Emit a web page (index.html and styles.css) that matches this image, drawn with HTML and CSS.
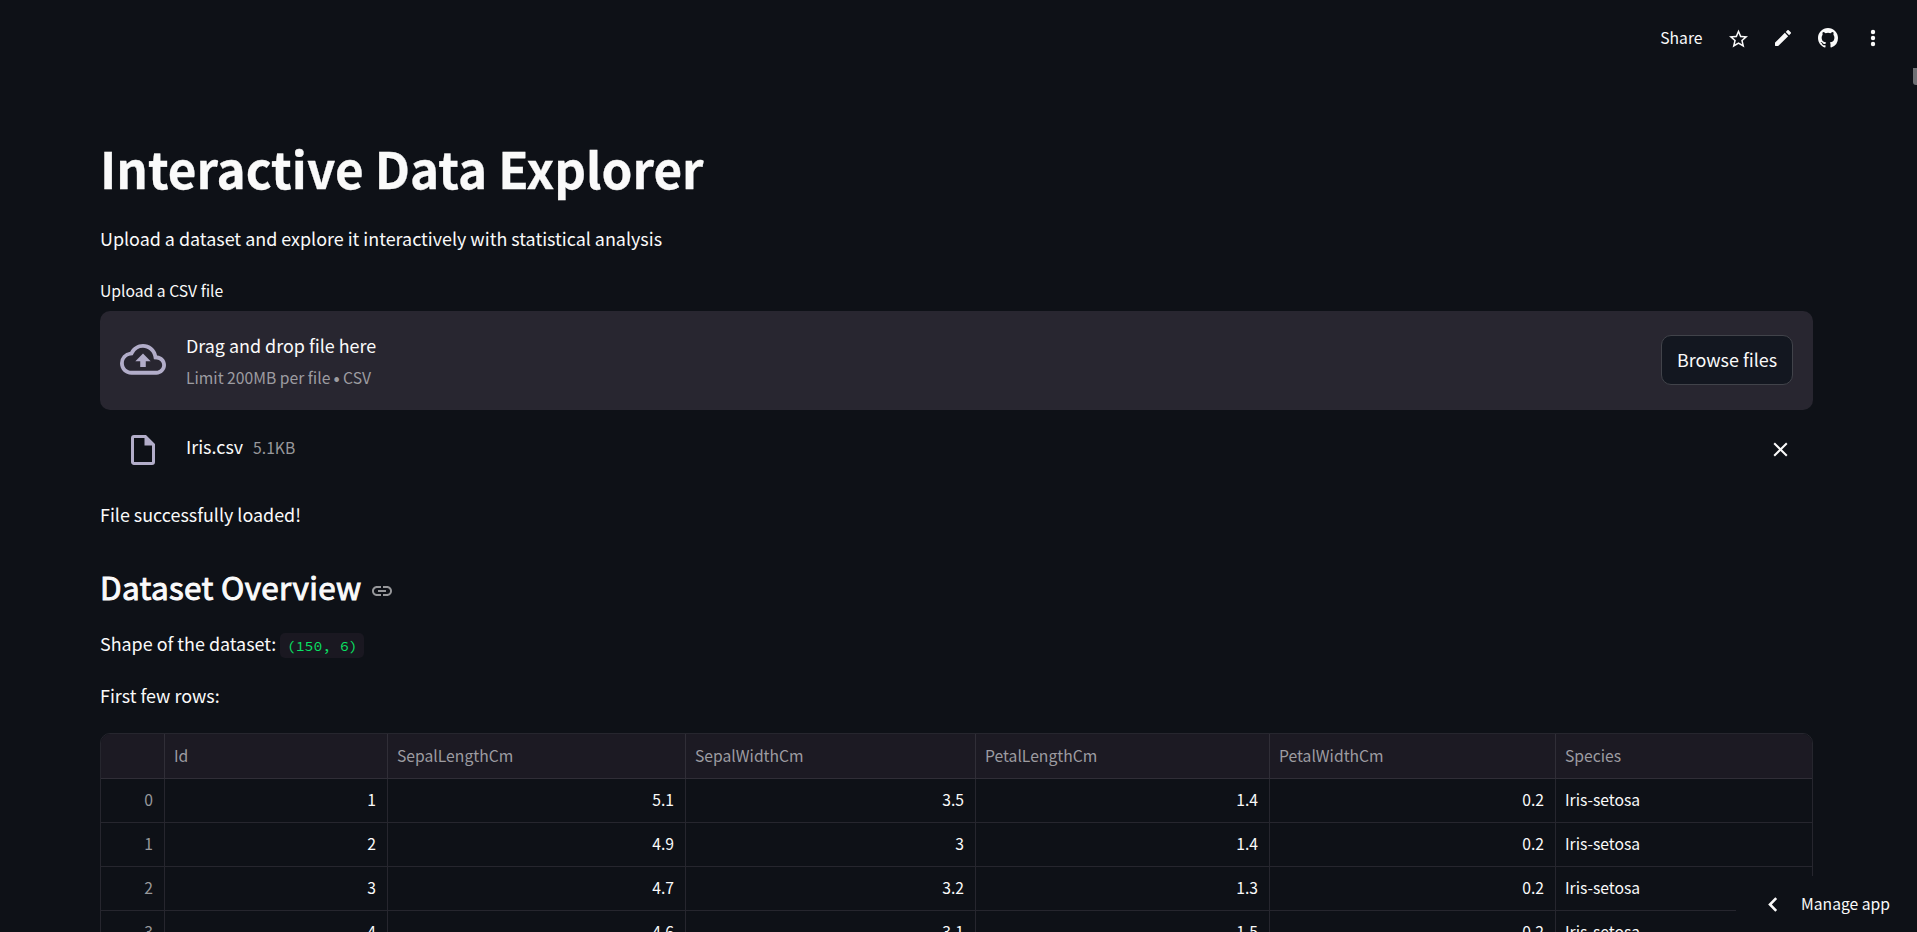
FILE: index.html
```html
<!DOCTYPE html>
<html lang="en">
<head>
<meta charset="utf-8">
<title>Interactive Data Explorer</title>
<link rel="stylesheet" href="styles.css">
</head>
<body>
<header class="toolbar">
  <span class="share">Share</span>
  <svg class="star" viewBox="2 2 20 19" width="19" height="19"><path d="M22 9.24l-7.19-.62L12 2 9.19 8.63 2 9.24l5.46 4.73L5.82 21 12 17.27 18.18 21l-1.63-7.03L22 9.24zM12 15.4l-3.76 2.27 1-4.28-3.32-2.88 4.38-.38L12 6.1l1.71 4.04 4.38.38-3.32 2.88 1 4.28L12 15.4z"/></svg>
  <svg class="pencil" viewBox="3 3 18 18" width="16" height="16"><path d="M3 17.46v3.04c0 .28.22.5.5.5h3.04c.13 0 .26-.05.35-.15L17.81 9.94l-3.75-3.75L3.15 17.1c-.1.1-.15.22-.15.36zM20.71 7.04a1 1 0 0 0 0-1.41l-2.34-2.34a1 1 0 0 0-1.41 0l-1.83 1.83 3.75 3.75 1.83-1.83z"/></svg>
  <svg class="github" viewBox="0 0 16 16" width="20" height="20"><path d="M8 0C3.58 0 0 3.58 0 8c0 3.54 2.29 6.53 5.47 7.59.4.07.55-.17.55-.38 0-.19-.01-.82-.01-1.49-2.01.37-2.53-.49-2.69-.94-.09-.23-.48-.94-.82-1.13-.28-.15-.68-.52-.01-.53.63-.01 1.08.58 1.23.82.72 1.21 1.87.87 2.33.66.07-.52.28-.87.51-1.07-1.78-.2-3.64-.89-3.64-3.95 0-.87.31-1.59.82-2.15-.08-.2-.36-1.02.08-2.12 0 0 .67-.21 2.2.82a7.42 7.42 0 0 1 4 0c1.53-1.04 2.2-.82 2.2-.82.44 1.1.16 1.92.08 2.12.51.56.82 1.27.82 2.15 0 3.07-1.87 3.75-3.65 3.95.29.25.54.73.54 1.48 0 1.07-.01 1.93-.01 2.2 0 .21.15.46.55.38A8.01 8.01 0 0 0 16 8c0-4.42-3.58-8-8-8z"/></svg>
  <svg class="kebab" viewBox="0 0 6 18" width="6" height="18"><circle cx="3" cy="3" r="2.2"/><circle cx="3" cy="9" r="2.2"/><circle cx="3" cy="15" r="2.2"/></svg>
</header>
<div class="scroll-thumb"></div>

<main class="content">
  <h1 class="title"><span>Interactive Data Explorer</span></h1>
  <p class="text intro"><span>Upload a dataset and explore it interactively with statistical analysis</span></p>
  <div class="label"><span>Upload a CSV file</span></div>
  <section class="dropzone">
    <svg class="cloud" viewBox="0 4 24 16" width="46" height="30.67"><path d="M19.35 10.04A7.49 7.49 0 0 0 12 4C9.11 4 6.6 5.64 5.35 8.04A5.994 5.994 0 0 0 0 14c0 3.31 2.69 6 6 6h13c2.76 0 5-2.24 5-5 0-2.64-2.05-4.78-4.65-4.96zM19 18H6c-2.21 0-4-1.79-4-4 0-2.05 1.53-3.76 3.56-3.97l1.07-.11.5-.95A5.469 5.469 0 0 1 12 6c2.62 0 4.88 1.86 5.39 4.43l.3 1.5 1.53.11A2.98 2.98 0 0 1 22 15c0 1.65-1.35 3-3 3zM8 13h2.55v3h2.9v-3H16l-4-4z"/></svg>
    <div class="drop-text">
      <span class="drop-main">Drag and drop file here</span>
      <span class="drop-sub">Limit 200MB per file <span class="bullet">•</span> CSV</span>
    </div>
    <button class="browse">Browse files</button>
  </section>
  <div class="file">
    <svg class="file-icon" viewBox="4 2 16 20" width="24" height="30"><path d="M14 2H6a2 2 0 0 0-2 2v16c0 1.100.89 2 1.990 2H18a2 2 0 0 0 2-2V8l-6-6zM6 20V4h7v5h5v11H6z"/></svg>
    <span class="file-name">Iris.csv</span>
    <span class="file-size">5.1KB</span>
    <svg class="close" viewBox="0 0 15 15" width="15" height="15"><path d="M1.200 1.200l12.600 12.600M13.800 1.200L1.200 13.800"/></svg>
  </div>
  <p class="text loaded">File successfully loaded!</p>
  <h2 class="heading"><span>Dataset Overview</span>
    <svg class="link" viewBox="2 7 20 10" width="20" height="10"><path d="M3.900 12c0-1.710 1.390-3.100 3.100-3.100h4V7H7c-2.760 0-5 2.240-5 5s2.240 5 5 5h4v-1.900H7c-1.710 0-3.100-1.390-3.100-3.100zM8 13h8v-2H8v2zm9-6h-4v1.900h4c1.710 0 3.100 1.390 3.100 3.100s-1.390 3.100-3.100 3.100h-4V17h4c2.760 0 5-2.240 5-5s-2.240-5-5-5z"/></svg>
  </h2>
  <p class="text shape">Shape of the dataset: <code>(150, 6)</code></p>
  <p class="text rows">First few rows:</p>
  <div class="grid">
    <div class="row head"><span></span><span>Id</span><span>SepalLengthCm</span><span>SepalWidthCm</span><span>PetalLengthCm</span><span>PetalWidthCm</span><span>Species</span></div>
    <div class="row"><span>0</span><span>1</span><span>5.1</span><span>3.5</span><span>1.4</span><span>0.2</span><span>Iris-setosa</span></div>
    <div class="row"><span>1</span><span>2</span><span>4.9</span><span>3</span><span>1.4</span><span>0.2</span><span>Iris-setosa</span></div>
    <div class="row"><span>2</span><span>3</span><span>4.7</span><span>3.2</span><span>1.3</span><span>0.2</span><span>Iris-setosa</span></div>
    <div class="row"><span>3</span><span>4</span><span>4.6</span><span>3.1</span><span>1.5</span><span>0.2</span><span>Iris-setosa</span></div>
  </div>
</main>

<div class="manage">
  <svg viewBox="0 0 10 15" width="10" height="15"><path d="M8.200 1.200L2 7.500l6.200 6.300"/></svg>
  <span>Manage app</span>
</div>
</body>
</html>
```
FILE: styles.css
```css
* { box-sizing: border-box; margin: 0; padding: 0; }

body {
  position: relative;
  height: 932px;
  overflow: hidden;
  background: #0e1117;
  color: #fafafa;
  font: 400 17.92px/32px "Noto Sans CJK SC", "Noto Sans", sans-serif;
}

svg { display: block; flex: none; fill: currentColor; }
span { white-space: nowrap; }

.toolbar {
  display: flex;
  align-items: center;
  justify-content: flex-end;
  height: 76px;
  padding-right: 41.500px;
}
.share { font-size: 15.7px; margin-right: 26px; }
.star { margin-right: 27.500px; }
.pencil { margin-right: 27px; }
.github { margin-right: 31.500px; }

.scroll-thumb {
  position: absolute;
  right: 0;
  top: 68px;
  width: 4px;
  height: 17px;
  background: #6f7074;
  border-bottom-left-radius: 3px;
}

.content { padding: 59px 104px 0 100px; }
.title { height: 66px; font-size: 49.38px; line-height: 66px; font-weight: 700; }
.title span { -webkit-text-stroke: 0.3px #fafafa; }
.text { height: 32px; }
.intro { margin-top: 21px; }
.label { margin-top: 25px; height: 24px; line-height: 24px; font-size: 15.7px; }

.dropzone {
  display: flex;
  align-items: center;
  height: 99px;
  margin-top: 8px;
  padding: 0 20px;
  border-radius: 10px;
  background: #282630;
}
.cloud { color: #b2adc9; margin-bottom: 2px; }
.drop-text { display: flex; flex-direction: column; margin: 0 auto 0 20px; }
.drop-main { line-height: 32px; }
.drop-sub { font-size: 15.7px; line-height: 32px; padding-top: 1px; margin-bottom: -1px; color: #9d9ca1; }
.bullet { font-family: Lato, "Open Sans", sans-serif; font-size: 12.500px; line-height: 1; margin: 0 -0.8px; }
.browse {
  width: 132px;
  height: 50px;
  margin-bottom: 1px;
  padding-bottom: 3px;
  border: 1px solid #41434a;
  border-radius: 10px;
  background: #131720;
  color: #fafafa;
  font: inherit;
}

.file { display: flex; align-items: center; height: 78px; padding: 0 25px 0 31px; }
.file-icon { color: #b2adc9; margin: 2px 31px 0 0; }
.file-name { margin: -6px 10px 0 0; }
.file-size { margin-top: -3px; font-size: 15.7px; color: #97989b; }
.close { margin: 0 0 0 auto; fill: none; stroke: #fafafa; stroke-width: 2; }

.loaded { margin-top: 10px; }
.heading {
  display: flex;
  align-items: center;
  height: 42px;
  margin-top: 36px;
  font-size: 31.4px;
  line-height: 42px;
  font-weight: 400;
}
.heading span { -webkit-text-stroke: 1px #fafafa; letter-spacing: 0.36px; }
.link { color: #97989b; margin: 8px 0 0 10px; }
.shape { margin-top: 19px; }
.shape code {
  display: inline-block;
  height: 25px;
  padding: 0 6.500px;
  border-radius: 5px;
  background: #1a1821;
  color: #09e264;
  font: 14.75px/25px "Source Code Pro", "Noto Sans Mono CJK SC", "Liberation Mono", monospace;
}
.rows { margin-top: 20px; }

.grid {
  height: 240px;
  margin-top: 22px;
  overflow: hidden;
  border: 1px solid #26262e;
  border-radius: 10px 10px 0 0;
  font-size: 15.7px;
}
.row {
  display: grid;
  grid-template-columns: 64px 223px 298px 290px 294px 286px 1fr;
  height: 44px;
  line-height: 41px;
  border-bottom: 1px solid #26262e;
}
.row span { padding: 0 11px 0 9px; text-align: right; border-right: 1px solid #26262e; }
.row span:first-child { color: #97989b; }
.row span:last-child { text-align: left; border-right: 0; }
.head { height: 45px; line-height: 44px; background: #1c1a23; color: #9d9ca1; border-color: #302e37; }
.head span { text-align: left; border-color: #302e37; }

.manage {
  position: absolute;
  right: 0;
  bottom: 0;
  display: flex;
  align-items: center;
  width: 181px;
  height: 56px;
  padding: 0 0 0 32px;
  background: #0e1117;
  font-size: 15.7px;
}
.manage svg { margin-right: 23px; fill: none; stroke: #fafafa; stroke-width: 2.600; }
```
